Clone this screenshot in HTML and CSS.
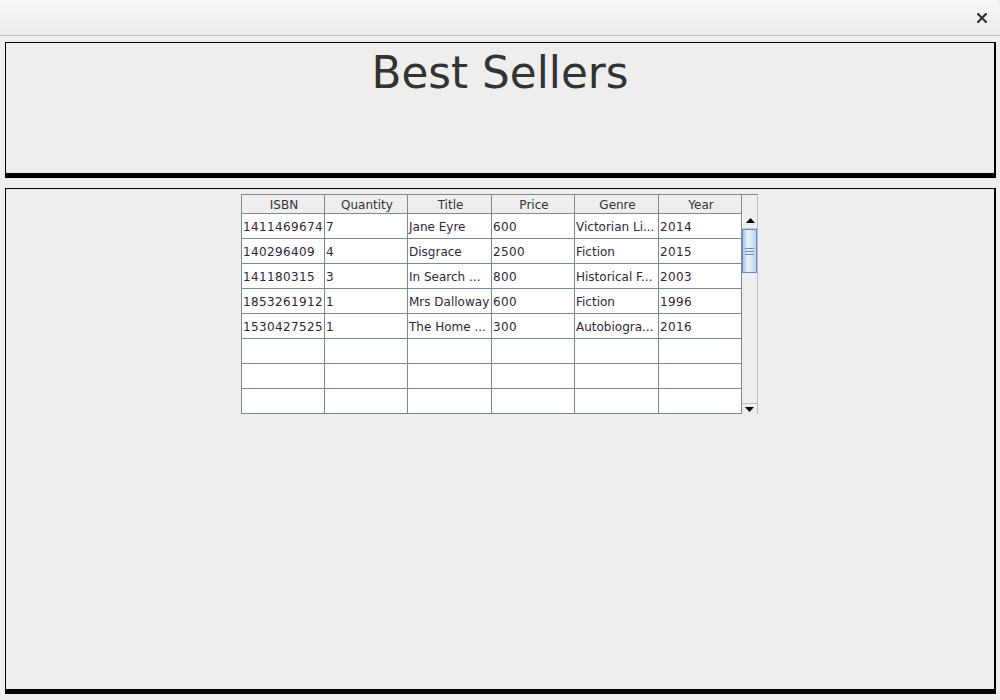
FILE: index.html
```html
<!DOCTYPE html>
<html>
<head>
<meta charset="utf-8">
<title>Best Sellers</title>
<link rel="stylesheet" href="styles.css">
</head>
<body>
<div class="titlebar">
  <svg class="close" width="10" height="10" viewBox="0 0 10 10"><path d="M1 1L9 9M9 1L1 9" stroke="#333" stroke-width="2.2" stroke-linecap="square"/></svg>
</div>
<div class="panel top-panel">
  <h1 class="title">Best Sellers</h1>
</div>
<div class="panel main-panel">
  <div class="table">
    <div class="thead">
      <div class="th c1">ISBN</div>
      <div class="th c2">Quantity</div>
      <div class="th c3">Title</div>
      <div class="th c4">Price</div>
      <div class="th c5">Genre</div>
      <div class="th c6">Year</div>
      <div class="th corner"></div>
    </div>
    <div class="tbody">
      <div class="grid">
        <div class="row"><div class="td c1 num">1411469674</div><div class="td c2 num">7</div><div class="td c3">Jane Eyre</div><div class="td c4 num">600</div><div class="td c5">Victorian Li...</div><div class="td c6 num">2014</div></div>
        <div class="row"><div class="td c1 num">140296409</div><div class="td c2 num">4</div><div class="td c3">Disgrace</div><div class="td c4 num">2500</div><div class="td c5">Fiction</div><div class="td c6 num">2015</div></div>
        <div class="row"><div class="td c1 num">141180315</div><div class="td c2 num">3</div><div class="td c3">In Search ...</div><div class="td c4 num">800</div><div class="td c5">Historical F...</div><div class="td c6 num">2003</div></div>
        <div class="row"><div class="td c1 num">1853261912</div><div class="td c2 num">1</div><div class="td c3">Mrs Dalloway</div><div class="td c4 num">600</div><div class="td c5">Fiction</div><div class="td c6 num">1996</div></div>
        <div class="row"><div class="td c1 num">1530427525</div><div class="td c2 num">1</div><div class="td c3">The Home ...</div><div class="td c4 num">300</div><div class="td c5">Autobiogra...</div><div class="td c6 num">2016</div></div>
        <div class="row"><div class="td c1"></div><div class="td c2"></div><div class="td c3"></div><div class="td c4"></div><div class="td c5"></div><div class="td c6"></div></div>
        <div class="row"><div class="td c1"></div><div class="td c2"></div><div class="td c3"></div><div class="td c4"></div><div class="td c5"></div><div class="td c6"></div></div>
        <div class="row"><div class="td c1"></div><div class="td c2"></div><div class="td c3"></div><div class="td c4"></div><div class="td c5"></div><div class="td c6"></div></div>
      </div>
      <div class="scrollbar">
        <div class="sb-btn up"><svg width="9" height="5" viewBox="0 0 9 5"><path d="M0 5L4.5 0L9 5Z" fill="#000"/></svg></div>
        <div class="thumb"><span></span><span></span><span></span></div>
        <div class="track"></div>
        <div class="sb-btn down"><svg width="9" height="5" viewBox="0 0 9 5"><path d="M0 0L9 0L4.5 5Z" fill="#000"/></svg></div>
      </div>
    </div>
  </div>
</div>
</body>
</html>
```

FILE: styles.css
```css
html, body {
  margin: 0;
  padding: 0;
}
body {
  width: 1000px;
  height: 700px;
  overflow: hidden;
  background: #eeeeee;
  font-family: "DejaVu Sans", "Liberation Sans", sans-serif;
  color: #333333;
}
.titlebar {
  height: 35px;
  border-bottom: 1px solid #bdbdbd;
  background: linear-gradient(#f8f8f8, #ebebeb);
  display: flex;
  align-items: center;
  justify-content: flex-end;
  padding-right: 13px;
  box-sizing: content-box;
  border-top-right-radius: 6px;
}
.close {
  display: block;
  margin-top: 1px;
}
.panel {
  margin-left: 5px;
  width: 988px;
  border-style: solid;
  border-color: #000;
  border-width: 1px 2px 5px 1px;
  background: #eeeeee;
}
.top-panel {
  margin-top: 6px;
  height: 130px;
}
.title {
  margin: 0;
  padding-top: 5px;
  font-weight: normal;
  font-size: 43.7px;
  line-height: 50px;
  text-align: center;
  color: #333333;
}
.main-panel {
  margin-top: 10px;
  height: 500px;
  display: flex;
  justify-content: center;
  align-items: flex-start;
}
.table {
  margin-top: 5px;
  margin-right: 1px;
  width: 517px;
  font-size: 12px;
}
.thead {
  display: flex;
  height: 19px;
  border-top: 1px solid #7a8a99;
  border-left: 1px solid #7a8a99;
  background: #eeeeee;
}
.th {
  box-sizing: border-box;
  height: 19px;
  border-right: 1px solid #7a8a99;
  border-bottom: 1px solid #7a8a99;
  padding-left: 2px;
  text-align: center;
  line-height: 20px;
  color: #333333;
}
.c1, .c2, .c4, .c6 { width: 83px; }
.c3, .c5 { width: 84px; }
.th.corner {
  width: 16px;
  padding-left: 0;
  border-bottom: none;
  border-right: 1px solid #b8c1cb;
}
.tbody {
  display: flex;
  border-left: 1px solid #7a8a99;
}
.grid {
  width: 500px;
  background: #ffffff;
}
.row {
  display: flex;
  height: 25px;
}
.td {
  box-sizing: border-box;
  height: 25px;
  border-right: 1px solid #7a8a99;
  border-bottom: 1px solid #7a8a99;
  padding-left: 1px;
  padding-top: 1px;
  line-height: 24px;
  white-space: nowrap;
  overflow: hidden;
  color: #33263a;
}
.td.num {
  letter-spacing: 0.37px;
}
.scrollbar {
  width: 15px;
  height: 200px;
  border-right: 1px solid #b8c1cb;
  background: #eeeeee;
  display: flex;
  flex-direction: column;
}
.sb-btn {
  height: 15px;
  display: flex;
  align-items: center;
  justify-content: center;
  background: #eeeeee;
  box-sizing: border-box;
}
.sb-btn.up {
  border-bottom: 1px solid #c5ccd4;
  border-left: 1px solid #ffffff;
  align-items: flex-start;
  padding-top: 4px;
}
.sb-btn.down {
  height: 11px;
  border-top: 1px solid #b8c1cb;
  align-items: flex-start;
  padding-top: 3px;
}
.thumb {
  height: 44px;
  box-sizing: border-box;
  border: 1px solid #6d8cc7;
  background: linear-gradient(90deg, #a8c2e6, #e8f0fa 35%, #dbe6f4 65%, #b9cfeb);
  display: flex;
  flex-direction: column;
  align-items: center;
  justify-content: center;
  gap: 2px;
}
.thumb span {
  display: block;
  width: 9px;
  height: 1px;
  background: #6d8cc7;
}
.track {
  flex: 1;
  background: #eeeeee;
}
```
